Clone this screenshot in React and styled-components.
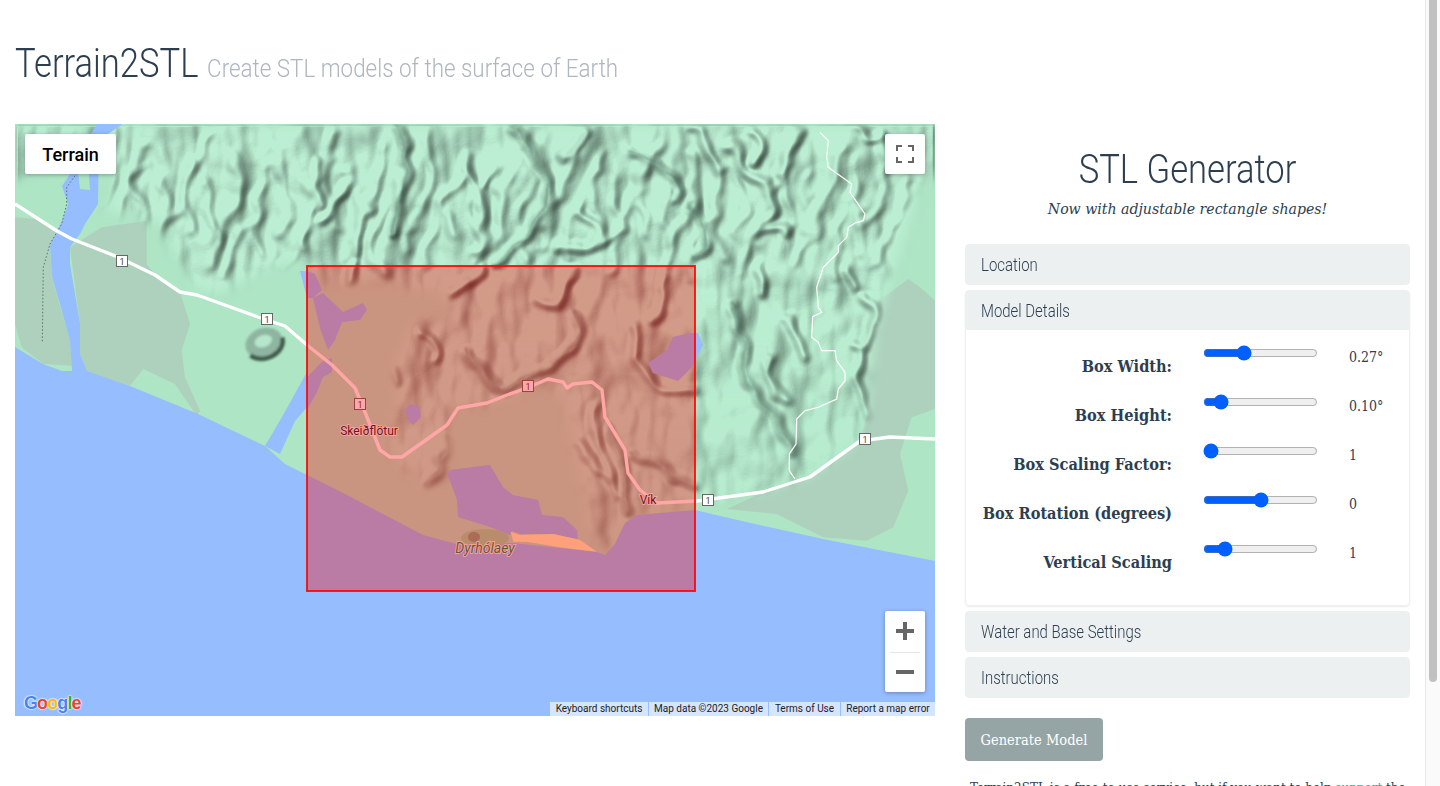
import React from "react";
import styled, { createGlobalStyle } from "styled-components";

const GlobalStyle = createGlobalStyle`
  body {
    margin: 0;
    background: #fff;
    color: #2c3e50;
    font-family: "DejaVu Serif Condensed", "DejaVu Serif", serif;
    font-size: 16px;
  }
`;

const Page = styled.div`
  min-height: 906px;
  padding: 0 15px;
  box-sizing: border-box;
`;

const ScrollTrack = styled.div`
  position: fixed;
  top: 0;
  right: 0;
  bottom: 0;
  width: 14px;
  background: #fafafa;
  border-left: 1px solid #e8e8e8;
`;

const ScrollThumb = styled.div`
  width: 8px;
  height: 682px;
  margin-left: 3px;
  background: #c1c1c1;
  border-radius: 0 0 4px 4px;
`;

const Header = styled.header`
  height: 124px;
  padding-top: 40px;
  box-sizing: border-box;
`;

const Title = styled.h1`
  margin: 0;
  font-family: Roboto, "Liberation Sans", sans-serif;
  font-size: 40px;
  line-height: 48px;
  font-weight: 300;
  color: #2c3e50;
  white-space: nowrap;
  transform: scaleX(0.865);
  transform-origin: left center;
`;

const Tagline = styled.small`
  margin-left: 10px;
  font-size: 25.9px;
  color: #aeb6bf;
`;

const Columns = styled.main`
  display: grid;
  grid-template-columns: 920px 445px;
  column-gap: 30px;
  align-items: start;
`;

const MapFrame = styled.div`
  position: relative;
  width: 920px;
  height: 592px;
  overflow: hidden;
  background: #aee5c5;
`;

const MapArt = styled.svg`
  display: block;
  width: 920px;
  height: 592px;
`;

const MapButton = styled.div`
  position: absolute;
  top: 10px;
  left: ${(p) => (p.$left ? "10px" : "auto")};
  right: ${(p) => (p.$left ? "auto" : "10px")};
  display: flex;
  align-items: center;
  justify-content: center;
  width: ${(p) => (p.$left ? "91px" : "40px")};
  height: 40px;
  background: #fff;
  border-radius: 2px;
  box-shadow: 0 1px 4px rgba(0, 0, 0, 0.3);
  font-family: Roboto, sans-serif;
  font-size: 18px;
  font-weight: 500;
  color: #000;
`;

const ZoomBox = styled.div`
  position: absolute;
  right: 10px;
  bottom: 24px;
  width: 40px;
  height: 81px;
  background: #fff;
  border-radius: 2px;
  box-shadow: 0 1px 4px rgba(0, 0, 0, 0.3);
  display: flex;
  flex-direction: column;
`;

const ZoomStep = styled.div`
  flex: 1;
  display: flex;
  align-items: center;
  justify-content: center;
  position: relative;
  & + &::before {
    content: "";
    position: absolute;
    top: 0;
    left: 5px;
    right: 5px;
    height: 1px;
    background: #e6e6e6;
  }
`;

const GoogleMark = styled.div`
  position: absolute;
  left: 9px;
  bottom: 2px;
  font-family: "Liberation Sans", sans-serif;
  font-size: 18px;
  font-weight: 700;
  line-height: 22px;
  letter-spacing: -0.9px;
  text-shadow: 0 0 1px #fff, 0 0 2px #fff, 0 0 2px #fff;
`;

const Letter = styled.span`
  color: ${(p) => p.$color};
`;

const Attribution = styled.div`
  position: absolute;
  right: 0;
  bottom: 0;
  display: flex;
  gap: 1px;
  height: 14px;
  font-family: Roboto, sans-serif;
  font-size: 10px;
  line-height: 14px;
  color: #222;
`;

const AttributionItem = styled.span`
  width: ${(p) => p.$width}px;
  text-align: center;
  background: rgba(255, 255, 255, 0.6);
`;

const Side = styled.aside`
  display: flex;
  flex-direction: column;
`;

const SideTitle = styled.h2`
  margin: 22px 0 0;
  font-family: Roboto, "Liberation Sans", sans-serif;
  font-size: 40px;
  line-height: 48px;
  font-weight: 300;
  text-align: center;
  transform: scaleX(0.865);
`;

const SideNote = styled.p`
  margin: 3px 0 23px;
  font-style: italic;
  font-size: 15.7px;
  line-height: 24px;
  text-align: center;
`;

const Panel = styled.section`
  margin-bottom: 5px;
  border-radius: 4px;
  border: 1px solid #ecf0f1;
  box-shadow: ${(p) => (p.$open ? "0 1px 2px rgba(0, 0, 0, 0.08)" : "none")};
`;

const PanelHead = styled.div`
  height: 39px;
  padding-left: 15px;
  background: #ecf0f1;
  line-height: 39px;
`;

const PanelName = styled.span`
  display: inline-block;
  font-family: Roboto, "Liberation Sans", sans-serif;
  font-size: 18px;
  font-weight: 300;
  color: #2c3e50;
  transform: scaleX(0.83);
  transform-origin: left center;
  white-space: nowrap;
`;

const PanelBody = styled.div`
  height: 259.5px;
  padding-top: 15px;
`;

const SliderRow = styled.div`
  display: grid;
  grid-template-columns: 206px 115px auto;
  column-gap: 31px;
  height: 49px;
`;

const SliderLabel = styled.label`
  margin-top: 10px;
  font-size: 16.2px;
  font-weight: 700;
  line-height: 24px;
  text-align: right;
`;

const SliderInput = styled.input`
  width: 115px;
  height: 16px;
  margin: 0;
  accent-color: #0060ff;
`;

const SliderValue = styled.span`
  font-size: 14px;
  line-height: 24px;
`;

const GenerateButton = styled.button`
  align-self: flex-start;
  width: 138px;
  height: 43px;
  margin-top: 15.5px;
  padding: 0;
  border: 0;
  border-radius: 4px;
  background: #95a5a6;
  color: #fff;
  font-family: "DejaVu Serif Condensed", "DejaVu Serif", serif;
  font-size: 14.5px;
`;

const Blurb = styled.p`
  margin: 15px 0 0;
  padding: 0 5px;
  font-size: 13.3px;
  line-height: 24px;
  white-space: nowrap;
`;

const BlurbLink = styled.a`
  color: #18bc9c;
  text-decoration: none;
`;

// reference crops were read at 3x, these turn crop points into map points
const crop = (ox, oy) => (pts) => pts.map(([x, y]) => [ox + x / 3, oy + y / 3]);
const fromMain = crop(0, 0);
const fromSea = crop(285, 136);
const fromEast = crop(675, 0);
const fromNorth = crop(285, 0);

const line = (pts) => "M" + pts.map((p) => p.map((n) => n.toFixed(1)).join(" ")).join("L");
const poly = (pts) => pts.map((p) => p.join(",")).join(" ");

const smooth = (pts) => {
  let d = `M${pts[0][0].toFixed(1)} ${pts[0][1].toFixed(1)}`;
  for (let i = 1; i < pts.length - 1; i++) {
    const mx = (pts[i][0] + pts[i + 1][0]) / 2;
    const my = (pts[i][1] + pts[i + 1][1]) / 2;
    d += `Q${pts[i][0].toFixed(1)} ${pts[i][1].toFixed(1)} ${mx.toFixed(1)} ${my.toFixed(1)}`;
  }
  const last = pts[pts.length - 1];
  return d + `L${last[0].toFixed(1)} ${last[1].toFixed(1)}`;
};

const SEA = [
  [0, 223], [28, 240], [47, 247], [72, 247], [115, 262], [183, 290], [250, 322], [270, 340], [292, 351],
  [328, 369], [408, 411], [445, 421], [498, 419], [582, 428], [590, 431], [600, 420], [610, 399], [622, 391],
  [680, 386], [718, 395], [808, 415], [920, 437], [920, 592], [0, 592],
];

const WATER = [
  [[82, 0], [107, 0], [96, 8], [84, 14], [83, 80], [70, 100], [65, 110], [55, 123], [55, 140], [65, 200], [65, 230], [72, 247], [57, 247], [55, 217], [45, 180], [37, 153], [35, 120], [47, 97], [53, 80], [47, 62], [55, 50], [70, 20]],
  [[292, 248], [267, 293], [250, 322], [265, 330], [280, 297], [292, 283]],
  [[317, 234], [317, 248], [308, 253], [302, 268], [292, 286], [292, 253], [307, 238]],
  [[298, 174], [308, 169], [328, 188], [348, 179], [352, 186], [345, 196], [327, 198], [320, 216], [313, 226], [305, 204]],
  [[285, 147], [292, 147], [300, 150], [307, 166], [298, 174], [292, 174]],
  [[633, 239], [652, 226], [658, 213], [675, 209], [683, 209], [688, 221], [677, 243], [663, 257], [638, 249]],
  [[390, 286], [395, 280], [405, 283], [406, 293], [398, 301], [393, 296]],
  [[432, 349], [435, 346], [450, 344], [475, 341], [488, 363], [498, 371], [523, 376], [527, 391], [548, 393], [562, 406], [563, 415], [538, 410], [505, 410], [497, 407], [495, 411], [475, 403], [443, 393], [442, 376]],
];

const BEACH = fromSea([[632, 815], [660, 825], [760, 822], [840, 840], [890, 875], [780, 862], [680, 845], [640, 845]]);

const OUTWASH = [
  fromMain([[0, 280], [60, 285], [125, 320], [105, 360], [110, 460], [165, 650], [170, 725], [85, 720], [20, 670], [0, 600]]),
  fromMain([[165, 370], [260, 310], [395, 290], [395, 420], [420, 452], [495, 503], [525, 600], [500, 680], [510, 760], [555, 860], [545, 875], [480, 780], [385, 735], [345, 785], [215, 742], [195, 690], [195, 600]]),
  fromEast([[655, 465], [690, 490], [735, 530], [735, 855], [665, 880], [630, 990], [655, 1100], [610, 1210], [530, 1250], [400, 1240], [260, 1170], [110, 1155], [230, 1100], [360, 1060], [510, 950], [530, 880], [510, 600], [570, 600], [540, 550]]),
];

const ROAD = [
  [0, 80], [42, 107], [57, 115], [103, 133], [140, 151], [165, 168], [182, 171], [243, 193], [270, 202], [292, 221],
  [317, 241], [340, 264], [348, 283], [365, 326], [375, 333], [387, 333], [432, 301], [443, 284], [472, 279],
  [492, 271], [512, 264], [533, 255], [548, 258], [552, 264], [558, 260], [577, 258], [587, 266], [590, 293],
  [610, 326], [613, 349], [625, 366], [642, 379], [682, 377], [748, 368], [795, 353], [845, 317], [875, 313], [920, 315],
];

const TRACK = fromEast([[390, 25], [415, 50], [410, 100], [415, 130], [485, 180], [480, 205], [525, 270], [520, 290], [495, 297], [475, 310], [470, 340], [445, 365], [445, 385], [400, 430], [380, 490], [385, 550], [395, 565], [368, 578], [365, 640], [385, 655], [395, 680], [435, 680], [440, 710], [465, 745], [465, 770], [445, 795], [440, 825], [385, 850], [345, 860], [320, 885], [318, 960], [298, 990], [298, 1040], [315, 1065]]);

const DOTTED = fromMain([[180, 155], [155, 190], [155, 240], [140, 300], [105, 360], [85, 430], [82, 655]]);

const HILLS = [
  [0, 0], [920, 0], [920, 50], [905, 60], [888, 117], [862, 200], [852, 293], [845, 317], [795, 353], [748, 368], [682, 379],
  [618, 393], [610, 399], [590, 431], [578, 423], [548, 276], [533, 257], [475, 281], [442, 285], [432, 303], [432, 359],
  [408, 363], [388, 343], [372, 323], [382, 269], [382, 236], [398, 199], [442, 196], [428, 169], [352, 156], [312, 163],
  [292, 140], [267, 140], [200, 170], [180, 163], [143, 97], [92, 87], [105, 40], [60, 30], [0, 55],
];

const RAVINES = [
  ...[
    [[295, 0], [300, 40], [325, 100], [340, 150], [310, 205], [295, 270], [300, 290], [290, 330]],
    [[480, 120], [530, 200], [545, 240], [545, 330], [510, 390]],
    [[640, 10], [690, 90], [735, 125], [745, 200], [730, 280], [650, 350], [610, 385], [600, 420]],
    [[60, 100], [45, 190], [70, 240]],
    [[210, 250], [185, 290], [185, 350], [175, 420]],
    [[1000, 85], [1090, 130], [1150, 180], [1120, 240]],
    [[860, 10], [820, 80], [780, 110]],
    [[830, 240], [890, 300], [890, 350]],
    [[580, 130], [550, 190]],
    [[150, 180], [100, 240], [60, 300]],
    [[760, 360], [850, 380], [980, 330]],
  ].map(fromNorth),
  ...[
    [[0, 10], [100, 150]],
    [[170, 10], [220, 70], [190, 120]],
    [[110, 50], [160, 130], [240, 200], [260, 270], [200, 300]],
    [[0, 240], [50, 290], [60, 370], [20, 410], [0, 415]],
    [[320, 10], [320, 80], [250, 150]],
    [[490, 10], [520, 80], [580, 20]],
    [[210, 430], [240, 490], [220, 520]],
    [[110, 530], [160, 640], [165, 720], [200, 830], [300, 940], [300, 1000]],
    [[480, 410], [500, 510]],
    [[520, 530], [560, 610], [530, 670], [460, 660]],
    [[510, 680], [520, 800], [530, 900]],
    [[280, 570], [310, 650], [360, 710]],
    [[205, 320], [290, 300], [300, 350]],
    [[240, 690], [250, 780], [300, 850]],
  ].map(fromEast),
  ...[
    [[180, 20], [140, 70]],
    [[350, 220], [410, 240], [400, 320]],
    [[500, 260], [550, 360], [580, 410], [680, 350], [780, 310], [850, 230], [820, 150]],
    [[700, 100], [750, 160], [800, 100], [810, 30]],
    [[880, 440], [900, 600], [960, 720]],
    [[930, 500], [990, 640], [985, 770]],
    [[1000, 200], [995, 300]],
    [[990, 300], [1050, 350], [1180, 410]],
    [[440, 550], [420, 650], [385, 680]],
    [[840, 550], [880, 640], [920, 660]],
    [[290, 320], [310, 360]],
    [[1000, 580], [1100, 630], [1180, 680]],
    [[1100, 40], [1100, 150], [1040, 180]],
    [[580, 30], [440, 100]],
  ].map(fromSea),
];

const DEEP = [2, 0, 5, 14, 18, 27, 30, 33, 36].map((i) => RAVINES[i]);

// the fine north-south gullies, too many to trace one by one
const GULLIES = Array.from({ length: 46 }, (_, i) => {
  const x = 100 + i * 17.5;
  const top = 4 + ((i * 37) % 60);
  return [0, 1, 2, 3, 4].map((k) => [x + 11 * Math.sin(i * 1.7 + k * 1.1) - k * 4, top + k * 24]);
});

const SHIELDS = [[107, 137], [252, 195], [345, 280], [513, 262], [693, 376], [850, 315]];

const Shield = ({ x, y }) => (
  <g transform={`translate(${x - 6} ${y - 6})`}>
    <rect x="0.5" y="0.5" width="11" height="11" fill="#fff" stroke="#666" />
    <text x="6" y="9.5" textAnchor="middle" fontFamily="Roboto, sans-serif" fontSize="9" fill="#444">1</text>
  </g>
);

const PlaceName = ({ x, y, size, italic, color, children }) => (
  <text
    x={x}
    y={y}
    textAnchor="middle"
    fontFamily="Roboto, sans-serif"
    fontSize={size}
    fontStyle={italic ? "italic" : "normal"}
    fill={color}
    stroke="#fff"
    strokeWidth="1.6"
    paintOrder="stroke"
  >
    {children}
  </text>
);

const TerrainMap = () => (
  <MapArt viewBox="0 0 920 592">
    <defs>
      <filter id="relief" filterUnits="userSpaceOnUse" x="0" y="0" width="920" height="592" colorInterpolationFilters="sRGB">
        <feTurbulence type="fractalNoise" baseFrequency="0.022 0.012" numOctaves="3" seed="11" result="noise" />
        <feTurbulence type="fractalNoise" baseFrequency="0.03" numOctaves="2" seed="4" result="warp" />
        <feDisplacementMap in="SourceAlpha" in2="warp" scale="26" xChannelSelector="R" yChannelSelector="G" result="bent" />
        <feGaussianBlur in="bent" stdDeviation="2.8" result="ridges" />
        <feComposite in="ridges" in2="noise" operator="arithmetic" k1="0" k2="0.42" k3="1" k4="0" result="rough" />
        <feGaussianBlur in="rough" stdDeviation="0.9" result="height" />
        <feDiffuseLighting in="height" surfaceScale="13" diffuseConstant="1.1" lightingColor="#ffffff">
          <feDistantLight azimuth="225" elevation="60" />
        </feDiffuseLighting>
        <feComponentTransfer>
          <feFuncR type="linear" slope="0.7" intercept="0.3" />
          <feFuncG type="linear" slope="0.7" intercept="0.3" />
          <feFuncB type="linear" slope="0.7" intercept="0.3" />
        </feComponentTransfer>
      </filter>
      <filter id="worn" filterUnits="userSpaceOnUse" x="0" y="0" width="920" height="592">
        <feTurbulence type="fractalNoise" baseFrequency="0.03" numOctaves="2" seed="4" result="warp" />
        <feDisplacementMap in="SourceGraphic" in2="warp" scale="26" xChannelSelector="R" yChannelSelector="G" />
        <feGaussianBlur stdDeviation="1.3" />
      </filter>
      <filter id="soft"><feGaussianBlur stdDeviation="6" /></filter>
      <filter id="tiny"><feGaussianBlur stdDeviation="1.2" /></filter>
      <linearGradient id="fade" x1="0" y1="0" x2="0" y2="1">
        <stop offset="0.35" stopColor="#fff" />
        <stop offset="0.72" stopColor="#bbb" />
      </linearGradient>
      <mask id="hills" maskUnits="userSpaceOnUse" x="0" y="0" width="920" height="592">
        <polygon points={poly(HILLS)} fill="url(#fade)" filter="url(#soft)" />
      </mask>
    </defs>

    <rect width="920" height="592" fill="#aee5c5" />
    {OUTWASH.map((pts, i) => (
      <polygon key={i} points={poly(pts)} fill="#add1bd" />
    ))}

    <g mask="url(#hills)">
      <rect width="920" height="592" fill="#bbeed2" />
      <g filter="url(#relief)" style={{ mixBlendMode: "multiply" }}>
        {GULLIES.map((pts, i) => (
          <path key={i} d={smooth(pts)} fill="none" stroke="#000" strokeOpacity="0.4" strokeWidth="7" />
        ))}
        {RAVINES.map((pts, i) => (
          <path key={i} d={smooth(pts)} fill="none" stroke="#000" strokeOpacity="0.8" strokeWidth="8" />
        ))}
      </g>
      <g filter="url(#worn)" fill="none" stroke="#2b463a" strokeOpacity="0.4" strokeWidth="4" strokeLinecap="round">
        {DEEP.map((pts, i) => (
          <path key={i} d={smooth(pts)} />
        ))}
      </g>
    </g>

    <g filter="url(#tiny)" transform="rotate(-20 249 219)">
      <ellipse cx="249" cy="219" rx="19" ry="15" fill="#8fb5a1" />
      <path d="M232 226a19 15 0 0 0 36 -6" fill="none" stroke="#3f5a4c" strokeWidth="4.5" />
      <ellipse cx="249" cy="217" rx="9" ry="6" fill="#b6e6cb" />
    </g>

    <polygon points={poly(SEA)} fill="#96bdfd" />
    {WATER.map((pts, i) => (
      <polygon key={i} points={poly(pts)} fill="#96bdfd" />
    ))}
    <polygon points={poly(fromMain([[190, 150], [195, 195], [225, 198], [222, 150]]))} fill="#aee5c5" />
    <polygon points={poly(BEACH)} fill="#fff6c0" />
    <ellipse cx="470" cy="414" rx="24" ry="9" fill="#94d8a5" />
    <ellipse cx="459" cy="413" rx="6" ry="5" fill="#7fa585" />

    <path d={line(DOTTED)} fill="none" stroke="#5f6f68" strokeWidth="1" strokeDasharray="1.5 2" />
    <path d={line(TRACK)} fill="none" stroke="#fff" strokeWidth="1.2" />
    <path d={line(ROAD)} fill="none" stroke="#fff" strokeWidth="3.4" strokeLinejoin="round" />
    {SHIELDS.map(([x, y]) => (
      <Shield key={x} x={x} y={y} />
    ))}
    <PlaceName x={354} y={311} size={12} color="#201c2a">Skeiðflötur</PlaceName>
    <PlaceName x={633} y={380} size={12} color="#201c2a">Vík</PlaceName>
    <PlaceName x={470} y={429} size={14} italic color="#088c46">Dyrhólaey</PlaceName>

    <rect x="292" y="142" width="388" height="325" fill="#ff0000" fillOpacity="0.35" stroke="#ff0000" strokeOpacity="0.85" strokeWidth="2" />
  </MapArt>
);

const sliders = [
  { label: "Box Width:", value: "0.27°", pos: 33 },
  { label: "Box Height:", value: "0.10°", pos: 10 },
  { label: "Box Scaling Factor:", value: "1", pos: 0 },
  { label: "Box Rotation (degrees)", value: "0", pos: 50 },
  { label: "Vertical Scaling", value: "1", pos: 14 },
];

const logo = [
  ["G", "#4285f4"],
  ["o", "#ea4335"],
  ["o", "#fbbc05"],
  ["g", "#4285f4"],
  ["l", "#34a853"],
  ["e", "#ea4335"],
];

const attribution = [
  ["Keyboard shortcuts", 98],
  ["Map data ©2023 Google", 119],
  ["Terms of Use", 71],
  ["Report a map error", 94],
];

export default function App() {
  return (
    <Page>
      <GlobalStyle />
      <Header>
        <Title>
          Terrain2STL<Tagline>Create STL models of the surface of Earth</Tagline>
        </Title>
      </Header>
      <Columns>
        <MapFrame>
          <TerrainMap />
          <MapButton $left>Terrain</MapButton>
          <MapButton>
            <svg width="18" height="18" viewBox="0 0 18 18" fill="#666">
              <path d="M0 0h6v2H2v4H0zM12 0h6v6h-2V2h-4zM0 12h2v4h4v2H0zM16 12h2v6h-6v-2h4z" />
            </svg>
          </MapButton>
          <ZoomBox>
            <ZoomStep>
              <svg width="18" height="18" viewBox="0 0 18 18" fill="#666">
                <path d="M7 0h4v7h7v4h-7v7H7v-7H0V7h7z" />
              </svg>
            </ZoomStep>
            <ZoomStep>
              <svg width="18" height="18" viewBox="0 0 18 18" fill="#666">
                <path d="M0 7h18v4H0z" />
              </svg>
            </ZoomStep>
          </ZoomBox>
          <GoogleMark>
            {logo.map(([ch, color], i) => (
              <Letter key={i} $color={color}>{ch}</Letter>
            ))}
          </GoogleMark>
          <Attribution>
            {attribution.map(([text, width]) => (
              <AttributionItem key={text} $width={width}>{text}</AttributionItem>
            ))}
          </Attribution>
        </MapFrame>
        <Side>
          <SideTitle>STL Generator</SideTitle>
          <SideNote>Now with adjustable rectangle shapes!</SideNote>
          <Panel><PanelHead><PanelName>Location</PanelName></PanelHead></Panel>
          <Panel $open>
            <PanelHead><PanelName>Model Details</PanelName></PanelHead>
            <PanelBody>
              {sliders.map((s) => (
                <SliderRow key={s.label}>
                  <SliderLabel>{s.label}</SliderLabel>
                  <SliderInput type="range" defaultValue={s.pos} aria-label={s.label} />
                  <SliderValue>{s.value}</SliderValue>
                </SliderRow>
              ))}
            </PanelBody>
          </Panel>
          <Panel><PanelHead><PanelName>Water and Base Settings</PanelName></PanelHead></Panel>
          <Panel><PanelHead><PanelName>Instructions</PanelName></PanelHead></Panel>
          <GenerateButton>Generate Model</GenerateButton>
          <Blurb>
            Terrain2STL is a free-to-use service, but if you want to help <BlurbLink href="#">support</BlurbLink> the
          </Blurb>
        </Side>
      </Columns>
      <ScrollTrack><ScrollThumb /></ScrollTrack>
    </Page>
  );
}
